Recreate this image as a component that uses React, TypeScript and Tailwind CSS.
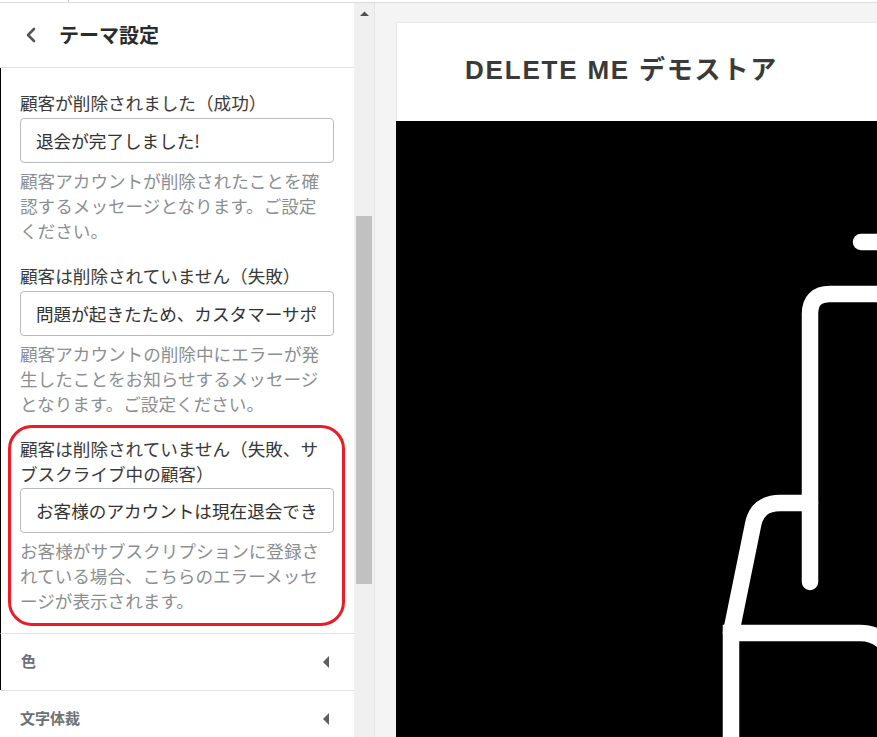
import { ChevronLeft } from "lucide-react"

const jp = "font-['Noto_Sans_CJK_JP','Liberation_Sans',sans-serif]"

function Field({ label, value, help, last }: { label: string; value: string; help: string; last?: boolean }) {
  return (
    <div className={last ? "pb-[19.4px]" : "mb-[21.3px]"}>
      <label className="block text-[17.6px] leading-[24.64px] text-[#3a3a3a]">{label}</label>
      <input
        readOnly
        value={value}
        className="block w-full h-[45px] mt-[2px] pl-[15px] pr-[16px] text-[17.6px] text-[#333] bg-white border border-[#b9bcc0] rounded-[4px] outline-none"
      />
      <p className="mt-[5px] text-[17.6px] leading-[25px] text-[#8c8f92]">{help}</p>
    </div>
  )
}

function AccordionRow({ title, edge }: { title: string; edge?: boolean }) {
  return (
    <div className={`h-[57px] flex items-center justify-between pl-[20px] pr-[25px] border-t border-[#e1e3e5] ${edge ? "border-l border-l-black" : ""}`}>
      <span className="text-[15px] font-bold text-[#6d7175]">{title}</span>
      <svg width="6" height="12" viewBox="0 0 6 12" className="block">
        <path d="M6 0V12L0 6Z" fill="#5c5f62" />
      </svg>
    </div>
  )
}

export default function App() {
  return (
    <div className={`w-[877px] h-[737px] overflow-hidden bg-[#f4f4f4] ${jp}`}>
      {/* top bar remnant */}
      <div className="h-[3px] bg-white border-b border-[#dcdcdc] flex">
        <div className="w-[69px] border-r border-[#c4c4c4]" />
      </div>
      <div className="flex h-[734px]">
        <aside className="w-[354px] shrink-0 bg-white relative">
          <header className="h-[65px] flex items-center pl-[20px] border-b border-[#e1e3e5]">
            <ChevronLeft size={24} strokeWidth={2.6} className="text-[#555] -ml-[1px]" />
            <h1 className="ml-[16px] text-[20px] font-bold text-[#2b2b2b]">テーマ設定</h1>
          </header>
          <div className="border-l border-black pl-[19px] pr-[20px] pt-[23px]">
            <Field
              label="顧客が削除されました（成功）"
              value="退会が完了しました!"
              help="顧客アカウントが削除されたことを確認するメッセージとなります。ご設定ください。"
            />
            <Field
              label="顧客は削除されていません（失敗）"
              value="問題が起きたため、カスタマーサポートにお問い合わせください"
              help="顧客アカウントの削除中にエラーが発生したことをお知らせするメッセージとなります。ご設定ください。"
            />
            <Field
              last
              label="顧客は削除されていません（失敗、サブスクライブ中の顧客）"
              value="お客様のアカウントは現在退会できません"
              help="お客様がサブスクリプションに登録されている場合、こちらのエラーメッセージが表示されます。"
            />
          </div>
          <AccordionRow title="色" edge />
          <AccordionRow title="文字体裁" />
          {/* red highlight drawn over the field */}
          <div className="absolute left-[8px] top-[422px] w-[337px] h-[201px] border-[3px] border-[#ed1c24] rounded-[24px] pointer-events-none" />
        </aside>

        {/* scrollbar */}
        <div className="w-[21px] shrink-0 bg-[#f0f0f0] border-r border-[#e6e6e6] px-[2px]">
          <svg width="17" height="13" viewBox="0 0 17 13" className="block mt-[8px]">
            <path d="M4 5H13L8.5 0.5Z" fill="#505050" />
          </svg>
          <div className="mt-[192px] h-[368px] bg-[#c1c1c1]" />
        </div>

        <main className="flex-1 pl-[21px] pt-[19px] min-w-0">
          <div className="h-[99px] pb-[4px] bg-white border-t border-l border-[#e8e8e8] flex items-center pl-[68px]">
            <span className="text-[26px] font-bold tracking-[1.8px] text-[#3a3a3a] font-['Liberation_Sans','Noto_Sans_CJK_JP',sans-serif] whitespace-nowrap">
              DELETE ME デモストア
            </span>
          </div>
          <div className="h-[616px] bg-black">
            <svg viewBox="396 121 481 616" width="481" height="616" className="block" fill="none" stroke="#fff" strokeWidth="16.5" strokeLinecap="round">
              <path d="M861 242H900" />
              <path d="M900 294H830Q810 294 810 314V582" />
              <path d="M810 503H780Q757 503 753 525L731 633" />
              <path d="M731 760V633H860Q880 633 890 650" />
            </svg>
          </div>
        </main>
      </div>
    </div>
  )
}
